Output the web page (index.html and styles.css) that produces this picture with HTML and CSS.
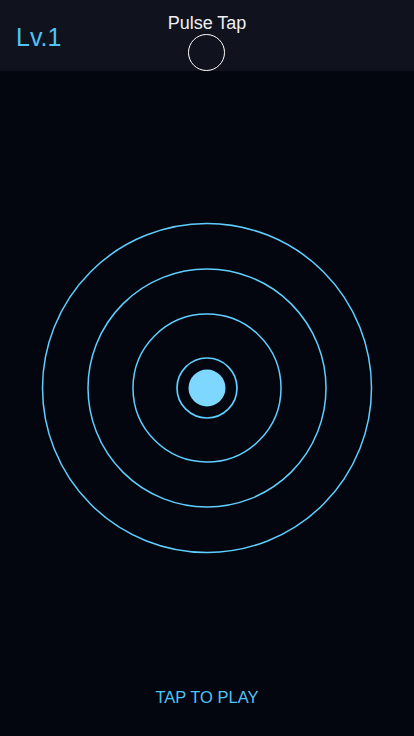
FILE: index.html
```html
<!DOCTYPE html>
<html lang="en">
<head>
<meta charset="utf-8">
<meta name="viewport" content="width=device-width, initial-scale=1">
<title>Pulse Tap</title>
<link rel="stylesheet" href="styles.css">
</head>
<body>
<div class="app">
  <header class="topbar">
    <div class="level">Lv.1</div>
    <div class="center">
      <div class="title">Pulse Tap</div>
      <div class="beat"></div>
    </div>
    <div class="spacer"></div>
  </header>
  <main class="stage">
    <svg class="rings" width="332" height="332" viewBox="0 0 332 332">
      <circle cx="166" cy="166" r="164.5" fill="none" stroke="#5fcfff" stroke-width="1.5"/>
      <circle cx="166" cy="166" r="119" fill="none" stroke="#5fcfff" stroke-width="1.5"/>
      <circle cx="166" cy="166" r="74" fill="none" stroke="#5fcfff" stroke-width="1.5"/>
      <circle cx="166" cy="166" r="30" fill="none" stroke="#5fcfff" stroke-width="1.7"/>
      <circle cx="166" cy="166" r="18.5" fill="#7dd7ff"/>
    </svg>
  </main>
  <footer class="footer">TAP TO PLAY</footer>
</div>
</body>
</html>
```
FILE: styles.css
```css
html, body {
  margin: 0;
  padding: 0;
  background: #03060f;
}
body {
  font-family: "Liberation Sans", Arial, sans-serif;
  width: 414px;
  height: 736px;
  overflow: hidden;
}
.app {
  display: flex;
  flex-direction: column;
  height: 736px;
}
.topbar {
  height: 71px;
  background: #10131e;
  display: grid;
  grid-template-columns: 1fr auto 1fr;
  box-sizing: border-box;
}
.level {
  color: #4fc3f7;
  font-size: 25px;
  line-height: 28px;
  padding-top: 23px;
  padding-left: 16px;
}
.center {
  display: flex;
  flex-direction: column;
  align-items: center;
  padding-top: 13px;
}
.title {
  color: #eef0f4;
  font-size: 18px;
  line-height: 20px;
}
.beat {
  margin-top: 1px;
  width: 35px;
  height: 35px;
  border: 1px solid #ffffff;
  border-radius: 50%;
}
.stage {
  display: flex;
  justify-content: center;
  margin-top: 151px;
}
.rings {
  display: block;
}
.footer {
  margin-top: 133px;
  text-align: center;
  color: #4fc3f7;
  font-size: 16.5px;
  line-height: 20px;
}
```
